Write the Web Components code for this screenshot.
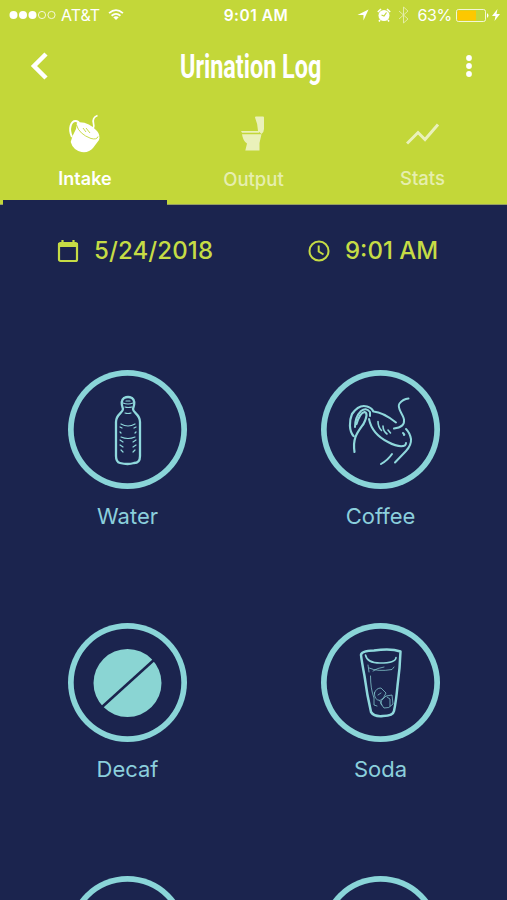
<!DOCTYPE html>
<html lang="en">
<head>
    <meta charset="UTF-8">
    <meta name="viewport" content="width=device-width, initial-scale=1.0">
    <title>Urination Log</title>
    <style>
        body {
            margin: 0;
            height: 900px;
            overflow: hidden;
            background: #1b244e;
            font-family: Inter, "Liberation Sans", sans-serif;
        }
    </style>
</head>
<body>
    <log-app>
        <status-bar carrier="AT&amp;T" time="9:01 AM" battery="63%"></status-bar>
        <title-bar>Urination Log</title-bar>
        <tab-bar>
            <tab-item active icon="cup">Intake</tab-item>
            <tab-item icon="toilet" style="--drop: 1px">Output</tab-item>
            <tab-item icon="chart">Stats</tab-item>
        </tab-bar>
        <date-row slot="content" date="5/24/2018" time="9:01 AM"></date-row>
        <drink-grid slot="content">
            <drink-item icon="bottle">Water</drink-item>
            <drink-item icon="coffee">Coffee</drink-item>
            <drink-item icon="decaf">Decaf</drink-item>
            <drink-item icon="soda">Soda</drink-item>
            <drink-item></drink-item>
            <drink-item></drink-item>
        </drink-grid>
    </log-app>

    <script>
        const icons = {
            cup: `<svg width="34" height="40" viewBox="0 0 34 40">
                <path d="M9 8.500Q20 7 29 17Q32.500 21 31 26L25 34Q21 39 13.500 38Q5 36 2.700 28Q4 22 8 15Z" fill="#fff"/>
                <path d="M4 23C0 15 3 6.500 8 7Q11 7.500 11 10" fill="none" stroke="#fff" stroke-width="2"/>
                <path d="M8.500 11Q11 20 23 24.500Q29 26 30 22.500M15 14L18 18M18 14L22 19" fill="none" stroke="#c3d739" stroke-width=".9"/>
                <path d="M22 16Q27 15 25.500 9.500Q24 3.500 29.500 1.500" fill="none" stroke="#fff" stroke-width="1.700"/></svg>`,
            toilet: `<svg width="34" height="40" viewBox="0 0 34 40" fill="#fff">
                <path d="M18 3.500Q18 2.500 19 2.500H26Q27 2.500 27 3.500V15Q27 18 24.500 20L21 17Q20.500 9 18 3.500Z"/><path d="M4 17H22V18.800H5Z"/>
                <path d="M5 20.200H24.500L22.500 29V36.500H8.300L10 29.500Q6 27 5 20.200Z"/></svg>`,
            chart: `<svg width="34" height="40" viewBox="0 0 34 40">
                <path d="M1 29.500L12 18.500L19 25.500L32 10.500" fill="none" stroke="#fff" stroke-width="3"/></svg>`,
            bottle: `<svg viewBox="0 0 108 108" fill="none" stroke="#8fd8dc" stroke-linecap="round">
                <path stroke-width="2.300" d="M49 33Q46 25 50 22Q54 20 58 22Q62 25 59 33C59 37 66 38 66 46V80Q66 87 60 87Q54 89 46 87Q42 86 42 80V46C42 38 49 37 49 33Z"/>
                <path stroke-width="1.200" d="M49 27Q54 29 59 27M52 25H56M51 31Q54 32 58 31M51 37Q54 38 57 37M47 48Q54 52 61 48M47 61Q54 64 61 61M46 51L48 52M62 51L60 52M46 56L47 57M62 56L61 57M46 64L49 66M62 64L59 66M46 69L49 71M62 69L59 71M47 74L49 76M61 74L59 76"/></svg>`,
            coffee: `<svg viewBox="0 0 108 108" fill="none" stroke="#8fd8dc" stroke-linecap="round">
                <path stroke-width="2.200" d="M27.500 76C25.500 62 30 57 36.500 48Q42 37 37.500 36C33 37 31 43 29.500 48M26.500 60C22 55 22 45 25 38Q32 28 40 30.500Q45 32 46 35"/>
                <path stroke-width="2" d="M42 43Q45 58 61 66C72 72 79 71 79 67M46.500 35.500C54 36 62 41 69 46.500M28 51Q28 41 34 35Q39 31 43 36L43 40"/>
                <path stroke-width="2" d="M67 52.500Q78 51 77 44C77 39 69 32 72.500 27.500Q76 23 81.500 22.500M79 53Q83 57 84 63Q84.500 69 79 75L68 86.500M65 78Q61 84 54 88M76 57Q78 59 77 59"/>
                <path stroke-width="1.600" d="M51 45.500Q51 51 54.500 54.500M56 50Q56 55 60 58M61 54L63.500 57"/></svg>`,
            decaf: `<svg viewBox="0 0 108 108">
                <circle cx="53.500" cy="54" r="34" fill="#8ad5d3"/>
                <path d="M28 78L81 30" stroke="#1b244e" stroke-width="2.600"/></svg>`,
            soda: `<svg viewBox="0 0 108 108" fill="none" stroke="#8fd8dc" stroke-linecap="round" stroke-linejoin="round">
                <path stroke-width="2.500" d="M34 26Q34 22 47 21.500Q64 19 73.500 22.500Q73 39 70.500 57Q69 73 67 82Q66 87 56 87Q47 88 44 83Q40 66 37.500 47Q34.500 31 34 26Z"/>
                <path stroke-width="1.600" d="M38.500 26Q40 34 53 34Q69 34 69 28.500"/>
                <path stroke-width="1" opacity=".7" d="M42 39Q51 43 65 40.500L67 38M46 42Q50 39 57 38M41 36L42 43M43.500 47Q43.500 60 47 69V76L50 77M47.500 64Q49 59 54 59L59 64Q57 70 53 71.500Q47 71 47.500 64ZM51 66L54 64M55 71L59 67L65 66L66 75Q62 80 57 79L54 75ZM60 68L63 70V77M53 72L55 76"/></svg>`
        };

        class LogApp extends HTMLElement {
            constructor() {
                super();
                this.attachShadow({ mode: 'open' }).innerHTML = `
                    <style>
                        :host { display: block; height: 900px; overflow: hidden; }
                        header { height: 205px; background: #c3d739; border-bottom: 1px solid #959f62; box-sizing: border-box; }
                    </style>
                    <header><slot></slot></header>
                    <slot name="content"></slot>`;
            }
        }

        class StatusBar extends HTMLElement {
            constructor() {
                super();
                this.attachShadow({ mode: 'open' }).innerHTML = `
                    <style>
                        :host {
                            display: grid;
                            grid-template-columns: 1fr auto 1fr;
                            align-items: center;
                            height: 30px;
                            padding: 0 6px 0 9px;
                            color: #fff;
                            font-size: 16px;
                        }
                        div { display: flex; align-items: center; }
                        .right { justify-content: flex-end; }
                        .carrier { margin-left: 5px; }
                        .wifi { margin-left: 8px; }
                        .time { padding-left: 2px; font-weight: 600; font-size: 15.5px; letter-spacing: .5px; }
                        .percent { margin: 0 4px 0 8px; letter-spacing: -.3px; }
                        svg { display: block; }
                    </style>
                    <div>
                        <svg width="47" height="10" fill="#fff">
                            <circle cx="4.500" cy="5" r="4"/><circle cx="14" cy="5" r="4"/><circle cx="23.500" cy="5" r="4"/>
                            <g fill="none" stroke="#fff" stroke-width=".8"><circle cx="33" cy="5" r="3.600"/><circle cx="42.500" cy="5" r="3.600"/></g>
                        </svg>
                        <span class="carrier"></span>
                        <svg class="wifi" width="16" height="12" viewBox="0 0 17 13" fill="none" stroke="#fff" stroke-width="2">
                            <path d="M1 4.500Q8.500-2 16 4.500M3.700 7.300Q8.500 3.200 13.300 7.300"/><path d="M5.500 9Q8.500 6.500 11.500 9L8.500 12Z" fill="#fff" stroke="none"/>
                        </svg>
                    </div>
                    <span class="time"></span>
                    <div class="right">
                        <svg width="12" height="12" viewBox="0 0 13 13"><path d="M12.500.5L7 12.500V6.500H.5Z" fill="#fff"/></svg>
                        <svg width="14" height="14" viewBox="0 0 14 14" style="margin-left:8px">
                            <circle cx="7" cy="7.500" r="5.500" fill="#fff"/><path d="M.8 4L4 1M13.200 4L10 1M3 12L2 13.500M11 12L12 13.500" stroke="#fff" stroke-width="1.600"/>
                            <path d="M9.500 4.500L7 8L4.500 7" fill="none" stroke="#c3d739" stroke-width="1.200"/>
                        </svg>
                        <svg width="11" height="18" viewBox="0 0 11 18" style="margin-left:7px" opacity=".55">
                            <path d="M1 5L10 13L5.500 17V1L10 5L1 13" fill="none" stroke="#fff"/>
                        </svg>
                        <span class="percent"></span>
                        <svg width="34" height="13" viewBox="0 0 34 13">
                            <rect x=".5" y=".5" width="29" height="12" rx="2" fill="none" stroke="#fff" stroke-opacity=".8"/>
                            <rect x="1.500" y="1.500" width="18.500" height="10" fill="#fdc800"/><path d="M31 4Q34 6.500 31 9Z" fill="#fff"/>
                        </svg>
                        <svg width="8" height="12" viewBox="0 0 8 12" style="margin: 0 1px 0 2px"><path d="M5.500 0L0 7H3.500L2.500 12L8 5H4.500Z" fill="#fff"/></svg>
                    </div>`;
            }
            connectedCallback() {
                const root = this.shadowRoot;
                root.querySelector('.carrier').textContent = this.getAttribute('carrier');
                root.querySelector('.time').textContent = this.getAttribute('time');
                root.querySelector('.percent').textContent = this.getAttribute('battery');
            }
        }

        class TitleBar extends HTMLElement {
            constructor() {
                super();
                this.attachShadow({ mode: 'open' }).innerHTML = `
                    <style>
                        :host {
                            display: grid;
                            grid-template-columns: 60px 1fr 60px;
                            align-items: center;
                            box-sizing: border-box;
                            height: 74px;
                            padding-bottom: 2px;
                            color: #fff;
                        }
                        h1 {
                            margin: 2px 0 0;
                            justify-self: center;
                            font: 700 33.5px/38px Roboto, sans-serif;
                            white-space: nowrap;
                            transform: translateX(-2.500px) scaleX(.698);
                        }
                        svg { display: block; }
                        .back { margin-left: 30px; }
                        .more { justify-self: center; margin-right: 16px; }
                    </style>
                    <svg class="back" width="18" height="28" viewBox="0 0 18 28"><path d="M16 2L4 14L16 26" fill="none" stroke="#fff" stroke-width="4.500"/></svg>
                    <h1><slot></slot></h1>
                    <svg class="more" width="6" height="24" fill="#fff"><circle cx="3" cy="4" r="2.900"/><circle cx="3" cy="12" r="2.900"/><circle cx="3" cy="20" r="2.900"/></svg>`;
            }
        }

        class TabBar extends HTMLElement {
            constructor() {
                super();
                this.attachShadow({ mode: 'open' }).innerHTML = `
                    <style>
                        :host { display: grid; grid-template-columns: repeat(3, 1fr); height: 100px; }
                    </style>
                    <slot></slot>`;
            }
        }

        class TabItem extends HTMLElement {
            constructor() {
                super();
                this.attachShadow({ mode: 'open' }).innerHTML = `
                    <style>
                        :host {
                            display: flex;
                            flex-direction: column;
                            align-items: center;
                            box-sizing: border-box;
                            height: 100px;
                            padding-top: 10px;
                            color: rgba(255, 255, 255, .6);
                            font-size: 18.5px;
                            font-weight: 500;
                            line-height: 24px;
                        }
                        :host([active]) {
                            --drop: 1px;
                            height: 101px;
                            margin: 0 2px 0 3px;
                            border-bottom: 5px solid #1b244e;
                            color: #fff;
                            font-size: 18px;
                            font-weight: 600;
                        }
                        .icon { height: 40px; opacity: .65; }
                        :host([active]) .icon { opacity: 1; }
                        .label { margin-top: calc(12px + var(--drop, 0px)); }
                    </style>
                    <div class="icon"></div>
                    <div class="label"><slot></slot></div>`;
            }
            connectedCallback() {
                this.shadowRoot.querySelector('.icon').innerHTML = icons[this.getAttribute('icon')];
            }
        }

        class DateRow extends HTMLElement {
            constructor() {
                super();
                this.attachShadow({ mode: 'open' }).innerHTML = `
                    <style>
                        :host {
                            display: flex;
                            box-sizing: border-box;
                            height: 92px;
                            padding-bottom: 1px;
                            color: #c6dc45;
                            font-size: 24px;
                            font-weight: 500;
                        }
                        div { display: flex; align-items: center; gap: 15px; width: 251px; box-sizing: border-box; padding-left: 57px; }
                        .date { letter-spacing: .12px; }
                        svg { display: block; }
                    </style>
                    <div>
                        <svg width="22" height="24" viewBox="0 0 22 24"><rect x="2" y="4" width="18" height="18" rx="1.500" fill="none" stroke="#c6dc45" stroke-width="2.200"/><path d="M5.500 1V4M16.500 1V4" stroke="#c6dc45" stroke-width="2.200"/><path d="M1 4H21V8H1Z" fill="#c6dc45"/></svg>
                        <span class="date"></span>
                    </div>
                    <div>
                        <svg width="22" height="22" viewBox="0 0 22 22"><g fill="none" stroke="#c6dc45" stroke-width="2"><circle cx="11" cy="11" r="9.500"/><path d="M10.700 5.500V11.500L15.500 14.500"/></g></svg>
                        <span class="time"></span>
                    </div>`;
            }
            connectedCallback() {
                this.shadowRoot.querySelector('.date').textContent = this.getAttribute('date');
                this.shadowRoot.querySelector('.time').textContent = this.getAttribute('time');
            }
        }

        class DrinkGrid extends HTMLElement {
            constructor() {
                super();
                this.attachShadow({ mode: 'open' }).innerHTML = `
                    <style>
                        :host {
                            display: grid;
                            grid-template-columns: 253px 253px;
                            grid-auto-rows: 253px;
                            box-sizing: border-box;
                            height: 603px;
                            overflow: hidden;
                            padding: 73.4px 0 0 1px;
                        }
                    </style>
                    <slot></slot>`;
            }
        }

        class DrinkItem extends HTMLElement {
            constructor() {
                super();
                this.attachShadow({ mode: 'open' }).innerHTML = `
                    <style>
                        :host {
                            display: flex;
                            flex-direction: column;
                            align-items: center;
                            color: #8bcfdc;
                            font-size: 22px;
                            line-height: 28px;
                        }
                        .ring {
                            box-sizing: border-box;
                            width: 119px;
                            height: 119px;
                            padding: 5.5px;
                            border-radius: 50%;
                            box-shadow: inset 0 0 0 5.7px #8ad5d8;
                        }
                        .ring svg { display: block; width: 108px; height: 108px; }
                        .label { margin-top: 13px; }
                    </style>
                    <div class="ring"></div>
                    <div class="label"><slot></slot></div>`;
            }
            connectedCallback() {
                this.shadowRoot.querySelector('.ring').innerHTML = icons[this.getAttribute('icon')] || '';
            }
        }

        customElements.define('log-app', LogApp);
        customElements.define('status-bar', StatusBar);
        customElements.define('title-bar', TitleBar);
        customElements.define('tab-bar', TabBar);
        customElements.define('tab-item', TabItem);
        customElements.define('date-row', DateRow);
        customElements.define('drink-grid', DrinkGrid);
        customElements.define('drink-item', DrinkItem);
    </script>
</body>
</html>
